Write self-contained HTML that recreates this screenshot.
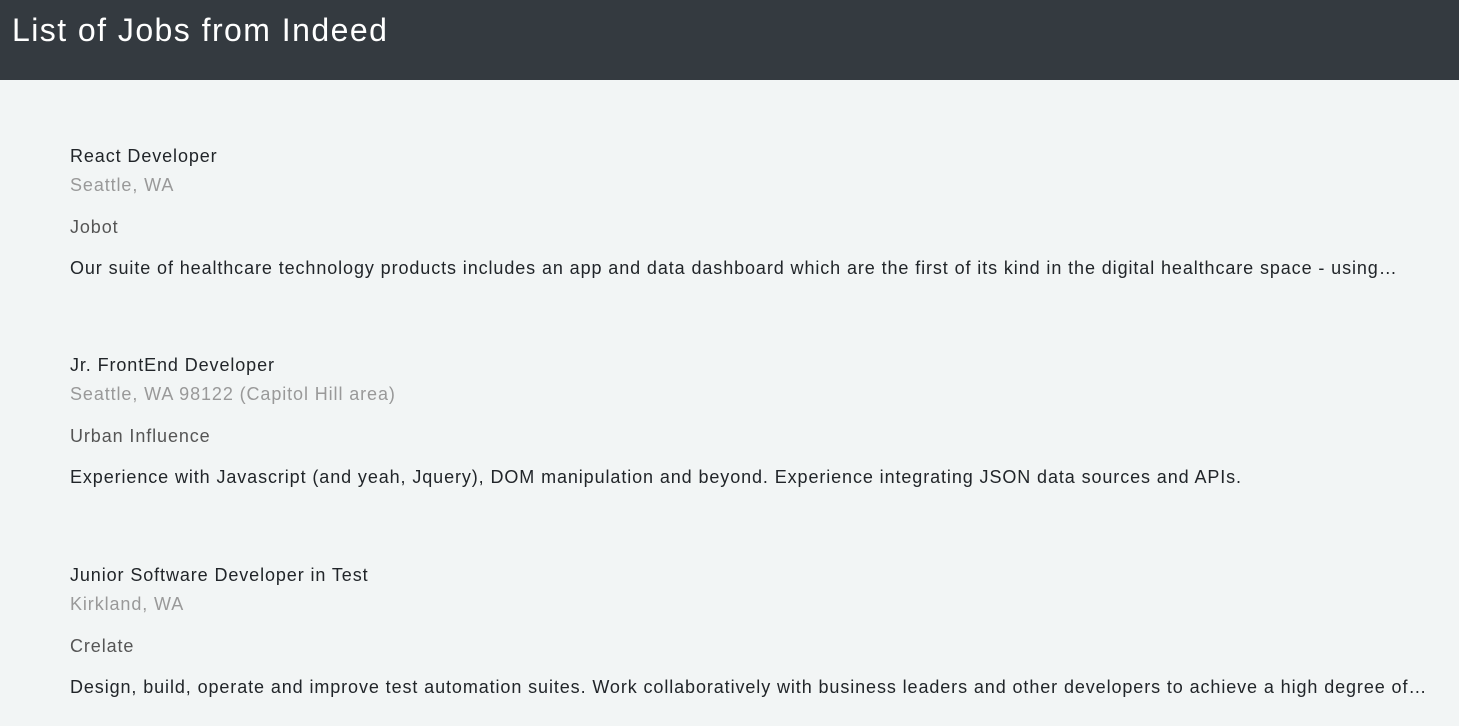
<!DOCTYPE html>
<html><head><meta charset="utf-8"><style>
html,body{margin:0;padding:0;width:1459px;height:726px;overflow:hidden;background:#f2f5f5;font-family:"Liberation Sans",sans-serif;}
.hd{height:80px;background:#343a40;color:#fff;font-size:32px;line-height:32px;box-sizing:border-box;padding:14px 0 0 12px;letter-spacing:1.45px;}
.job{position:absolute;left:70px;font-size:18px;color:#212529;white-space:nowrap;letter-spacing:0.9px;}
.job div{position:absolute;left:0;line-height:20px;}
.t{top:0}
.l{top:29px;color:#999}
.c{top:71px;color:#555}
.d{top:112px}
</style></head><body>
<div class="hd">List of Jobs from Indeed</div>
<div class="job" style="top:146px"><div class="t">React Developer</div><div class="l">Seattle, WA</div><div class="c">Jobot</div><div class="d">Our suite of healthcare technology products includes an app and data dashboard which are the first of its kind in the digital healthcare space - using…</div></div>
<div class="job" style="top:355px"><div class="t">Jr. FrontEnd Developer</div><div class="l">Seattle, WA 98122 (Capitol Hill area)</div><div class="c">Urban Influence</div><div class="d">Experience with Javascript (and yeah, Jquery), DOM manipulation and beyond. Experience integrating JSON data sources and APIs.</div></div>
<div class="job" style="top:565px"><div class="t">Junior Software Developer in Test</div><div class="l">Kirkland, WA</div><div class="c">Crelate</div><div class="d">Design, build, operate and improve test automation suites. Work collaboratively with business leaders and other developers to achieve a high degree of…</div></div>
</body></html>
